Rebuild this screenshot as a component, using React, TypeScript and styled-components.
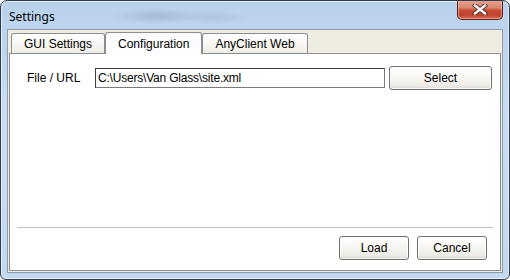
import React, { useState } from 'react';
import styled, { createGlobalStyle } from 'styled-components';

const GlobalStyle = createGlobalStyle`
  html, body {
    margin: 0;
    padding: 0;
    background: #ffffff;
  }
  body {
    font-family: "Liberation Sans", Arial, sans-serif;
    font-size: 12px;
  }
  * {
    box-sizing: border-box;
  }
`;

const Window = styled.div`
  width: 510px;
  height: 280px;
  display: flex;
  flex-direction: column;
  border: 1px solid #2f3d4f;
  border-radius: 7px 7px 6px 6px;
  padding: 0 6px 6px 6px;
  background: linear-gradient(180deg, #b9d1ec 0%, #c9dcf2 40%, #c4d8f0 100%);
  box-shadow: inset 0 0 0 1px rgba(255, 255, 255, 0.55);
  overflow: hidden;
`;

const TitleBar = styled.div`
  height: 28px;
  display: flex;
  align-items: flex-start;
  justify-content: space-between;
  background:
    radial-gradient(ellipse 45px 8px at 150px 15px, rgba(80, 100, 130, 0.22), rgba(80, 100, 130, 0) 100%),
    radial-gradient(ellipse 35px 7px at 205px 16px, rgba(80, 100, 130, 0.14), rgba(80, 100, 130, 0) 100%);
`;

const Title = styled.span`
  margin: 7px 0 0 2px;
  font-family: "Noto Sans", "Liberation Sans", sans-serif;
  font-size: 12px;
  color: #000;
`;

const CloseButton = styled.button`
  width: 46px;
  height: 20px;
  margin-top: -1px;
  padding: 0;
  display: flex;
  align-items: center;
  justify-content: center;
  border: 1px solid #5c2118;
  border-top: none;
  border-radius: 0 0 5px 5px;
  background: linear-gradient(180deg, #e8a392 0%, #d98672 40%, #c84a32 55%, #c0432c 80%, #d9745a 100%);
  box-shadow: inset 0 0 0 1px rgba(255, 210, 200, 0.45);
  cursor: pointer;
`;

const Client = styled.div`
  flex: 1;
  display: flex;
  flex-direction: column;
  background: #efede2;
  border: 1px solid #8d9cb0;
  padding: 1px 1px 1px 1px;
`;

const TabStrip = styled.div`
  display: flex;
  align-items: flex-end;
  height: 22px;
  padding-left: 2px;
`;

const Tab = styled.div<{ selected: boolean }>`
  height: ${({ selected }) => (selected ? '22px' : '20px')};
  padding: 0 12px;
  display: flex;
  align-items: center;
  justify-content: center;
  margin-bottom: ${({ selected }) => (selected ? '-1px' : '0')};
  border: 1px solid #8a8d93;
  border-bottom: none;
  border-radius: 3px 3px 0 0;
  background: ${({ selected }) =>
    selected ? '#fcfcfe' : 'linear-gradient(180deg, #ffffff 0%, #f6f5f0 60%, #ecebe4 100%)'};
  color: #000;
  font-size: 12px;
  position: relative;
  z-index: ${({ selected }) => (selected ? 2 : 1)};
  cursor: default;
`;

const Panel = styled.div`
  flex: 1;
  display: flex;
  flex-direction: column;
  background: #ffffff;
  border: 1px solid #8a8d93;
  padding: 12px 7px 10px 7px;
`;

const FieldRow = styled.div`
  display: flex;
  align-items: center;
  padding-left: 10px;
`;

const Label = styled.label`
  width: 68px;
  color: #000;
  font-size: 12px;
`;

const TextInput = styled.input`
  width: 290px;
  height: 20px;
  padding: 0 2px;
  border: 1px solid #7a7a7a;
  border-top-color: #3c3c3c;
  border-left-color: #3c3c3c;
  font-family: "Liberation Sans", Arial, sans-serif;
  font-size: 12px;
  letter-spacing: -0.2px;
  color: #000;
  outline: none;
`;

const Button = styled.button<{ wide?: boolean }>`
  width: ${({ wide }) => (wide ? '103px' : '70px')};
  height: 24px;
  padding: 0;
  border: 1px solid #707070;
  border-radius: 3px;
  background: linear-gradient(180deg, #ffffff 0%, #f7f6f2 45%, #ecebe6 85%, #d9d7cf 100%);
  box-shadow: inset 0 0 0 1px rgba(255, 255, 255, 0.7);
  font-family: "Liberation Sans", Arial, sans-serif;
  font-size: 12px;
  color: #000;
  cursor: pointer;
`;

const SelectButton = styled(Button)`
  margin-left: 4px;
`;

const Spacer = styled.div`
  flex: 1;
`;

const Separator = styled.div`
  height: 1px;
  background: #c2c2c2;
`;

const Footer = styled.div`
  display: flex;
  justify-content: flex-end;
  gap: 8px;
  padding: 8px 6px 0 0;
`;

const CloseIcon = () => (
  <svg width="16" height="11" viewBox="0 0 16 11">
    <path d="M3 1.5 L13 9.5 M13 1.5 L3 9.5" stroke="#4a2a24" strokeWidth="4.2" strokeLinecap="square" />
    <path d="M3 1.5 L13 9.5 M13 1.5 L3 9.5" stroke="#ffffff" strokeWidth="2.4" strokeLinecap="square" />
  </svg>
);

const tabs = ['GUI Settings', 'Configuration', 'AnyClient Web'];

const App = () => {
  const [selectedTab, setSelectedTab] = useState('Configuration');
  const [path, setPath] = useState('C:\\Users\\Van Glass\\site.xml');

  return (
    <>
      <GlobalStyle />
      <Window>
        <TitleBar>
          <Title>Settings</Title>
          <CloseButton aria-label="Close">
            <CloseIcon />
          </CloseButton>
        </TitleBar>
        <Client>
          <TabStrip>
            {tabs.map((t) => (
              <Tab key={t} selected={selectedTab === t} onClick={() => setSelectedTab(t)}>
                {t}
              </Tab>
            ))}
          </TabStrip>
          <Panel>
            <FieldRow>
              <Label>File / URL</Label>
              <TextInput value={path} onChange={(e) => setPath(e.target.value)} />
              <SelectButton wide>Select</SelectButton>
            </FieldRow>
            <Spacer />
            <Separator />
            <Footer>
              <Button>Load</Button>
              <Button>Cancel</Button>
            </Footer>
          </Panel>
        </Client>
      </Window>
    </>
  );
};

export default App;
